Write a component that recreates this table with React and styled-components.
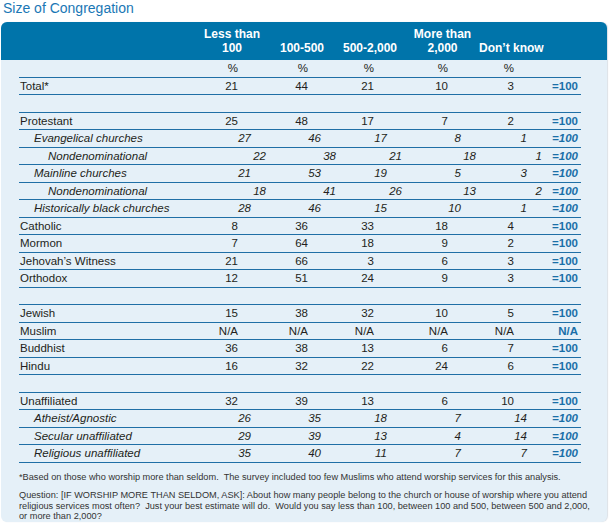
import React from 'react';
import styled, { createGlobalStyle } from 'styled-components';

const GlobalStyle = createGlobalStyle`
    body {
        margin: 0;
        background: #ffffff;
        font-family: "Liberation Sans", Arial, sans-serif;
    }
`;

const cols = [
    { top: 'Less than', bottom: '100', pr: 35, hpr: 12 },
    { top: '', bottom: '100-500', pr: 31, hpr: 8 },
    { top: '', bottom: '500-2,000', pr: 39, hpr: 12 },
    { top: 'More than', bottom: '2,000', pr: 31, hpr: 7 },
    { top: '', bottom: 'Don\u2019t know', pr: 30, hpr: 3 },
];

// level 0 = regular, 1 and 2 = italic sub rows (indented)
const groups = [
    [
        ['Total*', 0, ['21', '44', '21', '10', '3'], '=100'],
    ],
    [
        ['Protestant', 0, ['25', '48', '17', '7', '2'], '=100'],
        ['Evangelical churches', 1, ['27', '46', '17', '8', '1'], '=100'],
        ['Nondenominational', 2, ['22', '38', '21', '18', '1'], '=100'],
        ['Mainline churches', 1, ['21', '53', '19', '5', '3'], '=100'],
        ['Nondenominational', 2, ['18', '41', '26', '13', '2'], '=100'],
        ['Historically black churches', 1, ['28', '46', '15', '10', '1'], '=100'],
        ['Catholic', 0, ['8', '36', '33', '18', '4'], '=100'],
        ['Mormon', 0, ['7', '64', '18', '9', '2'], '=100'],
        ['Jehovah\u2019s Witness', 0, ['21', '66', '3', '6', '3'], '=100'],
        ['Orthodox', 0, ['12', '51', '24', '9', '3'], '=100'],
    ],
    [
        ['Jewish', 0, ['15', '38', '32', '10', '5'], '=100'],
        ['Muslim', 0, ['N/A', 'N/A', 'N/A', 'N/A', 'N/A'], 'N/A'],
        ['Buddhist', 0, ['36', '38', '13', '6', '7'], '=100'],
        ['Hindu', 0, ['16', '32', '22', '24', '6'], '=100'],
    ],
    [
        ['Unaffiliated', 0, ['32', '39', '13', '6', '10'], '=100'],
        ['Atheist/Agnostic', 1, ['26', '35', '18', '7', '14'], '=100'],
        ['Secular unaffiliated', 1, ['29', '39', '13', '4', '14'], '=100'],
        ['Religious unaffiliated', 1, ['35', '40', '11', '7', '7'], '=100'],
    ],
];

const shift = [0, 13, 28];

function App() {
    return (
        <Page>
            <GlobalStyle />
            <Title>Size of Congregation</Title>
            <Panel>
                <Header>
                    <span />
                    {cols.map((c) => (
                        <HeadCell key={c.bottom} $pr={c.hpr}>
                            {c.top && <>{c.top}<br /></>}
                            {c.bottom}
                        </HeadCell>
                    ))}
                    <span />
                </Header>
                <Body>
                    <Row>
                        <Label $level={0} />
                        {cols.map((c) => (
                            <Num key={c.bottom} $pr={c.pr}>%</Num>
                        ))}
                        <span />
                    </Row>
                    {groups.map((rows, gi) => (
                        <React.Fragment key={gi}>
                            {gi > 0 && <Spacer />}
                            {rows.map(([label, level, vals, total], ri) => (
                                <Row key={ri}>
                                    <Label $level={level}>{label}</Label>
                                    {vals.map((v, i) => (
                                        <Num key={i} $pr={cols[i].pr - shift[level]} $italic={level > 0}>
                                            {v}
                                        </Num>
                                    ))}
                                    <Sum $italic={level > 0}>{total}</Sum>
                                </Row>
                            ))}
                        </React.Fragment>
                    ))}
                </Body>
                <Notes>
                    <Note>
                        *Based on those who worship more than seldom.{'\u00a0 '}The survey included too few Muslims who attend worship services for this analysis.
                    </Note>
                    <Note>
                        Question: [IF WORSHIP MORE THAN SELDOM, ASK]: About how many people belong to the church or house of worship where you attend<br />
                        religious services most often?{'\u00a0 '}Just your best estimate will do.{'\u00a0 '}Would you say less than 100, between 100 and 500, between 500 and 2,000,<br />
                        or more than 2,000?
                    </Note>
                </Notes>
            </Panel>
        </Page>
    );
}

export default App;

const Page = styled.div`
    width: 610px;
    height: 526px;
    overflow: hidden;
`;

const Title = styled.h1`
    margin: 0 0 6px 0;
    padding-left: 3px;
    font-size: 14px;
    line-height: 16px;
    font-weight: normal;
    color: #1a77b5;
`;

const Panel = styled.div`
    margin-left: 1px;
    width: 606px;
    height: 500px;
    box-sizing: border-box;
    background: #e5f0f8;
    border-radius: 6px;
    overflow: hidden;
    box-shadow: 1px 0 1px rgba(60, 90, 120, 0.18);
`;

const grid = `
    display: grid;
    grid-template-columns: 184px 70px 66px 74px 66px 65px 37px;
`;

const Header = styled.div`
    ${grid}
    align-items: end;
    height: 38px;
    box-sizing: border-box;
    padding: 0 26px 5px 18px;
    background: #0074aa;
    color: #ffffff;
`;

const HeadCell = styled.div`
    text-align: center;
    white-space: nowrap;
    padding-right: ${(p) => p.$pr}px;
    font-size: 12px;
    line-height: 14px;
    font-weight: bold;
`;

const Body = styled.div`
    padding: 0 26px 0 18px;
`;

const Row = styled.div`
    ${grid}
    align-items: center;
    height: 17.5px;
    box-sizing: border-box;
    border-bottom: 1px solid #1f6fa6;
    font-size: 11.5px;
    color: #231f20;
`;

const Spacer = styled.div`
    height: 17.5px;
    box-sizing: border-box;
    border-bottom: 1px solid #1f6fa6;
`;

const Label = styled.div`
    padding-left: ${(p) => 1 + p.$level * 14}px;
    font-style: ${(p) => (p.$level > 0 ? 'italic' : 'normal')};
    white-space: nowrap;
`;

const Num = styled.div`
    text-align: right;
    padding-right: ${(p) => p.$pr}px;
    font-style: ${(p) => (p.$italic ? 'italic' : 'normal')};
`;

const Sum = styled.div`
    text-align: right;
    padding-right: 3px;
    font-weight: bold;
    color: #1a6fa8;
    font-style: ${(p) => (p.$italic ? 'italic' : 'normal')};
`;

const Notes = styled.div`
    padding: 9px 10px 0 18px;
    display: flex;
    flex-direction: column;
    gap: 7.6px;
`;

const Note = styled.p`
    margin: 0;
    font-size: 9.2px;
    line-height: 10.8px;
    color: #333333;
    white-space: nowrap;
`;
